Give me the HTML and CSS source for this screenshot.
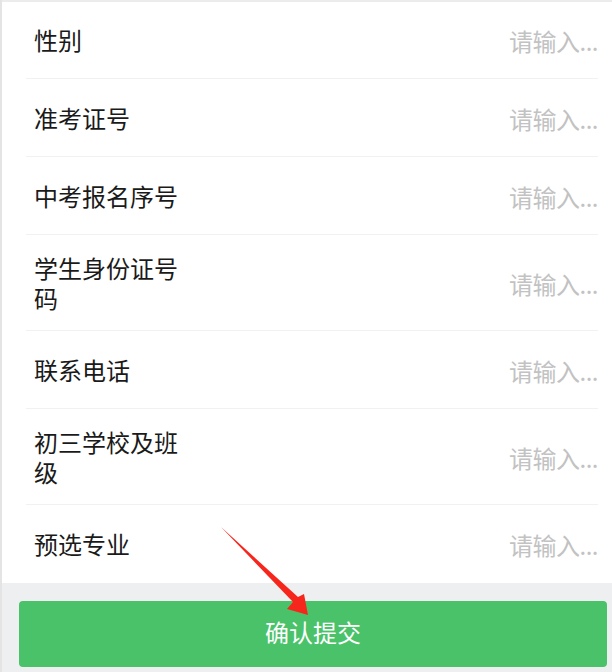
FILE: index.html
```html
<!DOCTYPE html>
<html lang="zh-CN">
<head>
    <meta charset="UTF-8">
    <meta name="viewport" content="width=device-width, initial-scale=1.0">
    <title>报名信息</title>
    <link rel="stylesheet" href="styles.css">
</head>
<body>
    <div class="page">
        <div class="edge"></div>
        <div class="main">
            <div class="form">
                <div class="form-row">
                    <label class="label">性别</label>
                    <input class="field" type="text" placeholder="请输入...">
                </div>
                <div class="form-row">
                    <label class="label">准考证号</label>
                    <input class="field" type="text" placeholder="请输入...">
                </div>
                <div class="form-row">
                    <label class="label">中考报名序号</label>
                    <input class="field" type="text" placeholder="请输入...">
                </div>
                <div class="form-row">
                    <label class="label">学生身份证号码</label>
                    <input class="field" type="text" placeholder="请输入...">
                </div>
                <div class="form-row">
                    <label class="label">联系电话</label>
                    <input class="field" type="text" placeholder="请输入...">
                </div>
                <div class="form-row">
                    <label class="label">初三学校及班级</label>
                    <input class="field" type="text" placeholder="请输入...">
                </div>
                <div class="form-row">
                    <label class="label">预选专业</label>
                    <input class="field" type="text" placeholder="请输入...">
                </div>
            </div>

            <div class="footer">
                <button class="btn-submit">确认提交</button>
            </div>
        </div>
    </div>

    <!-- annotation arrow pointing at the submit button -->
    <svg class="pointer" width="612" height="672" viewBox="0 0 612 672">
        <polygon points="221,527 298,597 304,594 308,615 287,609 293,602" fill="#f7261c"/>
    </svg>
</body>
</html>
```

FILE: styles.css
```css
:root {
    --text-color: #1a1a1a;
    --placeholder: #c2c2c2;
    --line-color: #f1f1f1;
    --bg-grey: #eeeff1;
    --green: #4ac26a;
}

* {
    box-sizing: border-box;
    margin: 0;
    padding: 0;
}

body {
    font-family: "Noto Sans CJK SC", "Noto Sans", sans-serif;
    color: var(--text-color);
    background-color: #fff;
    width: 612px;
    height: 672px;
    overflow: hidden;
    position: relative;
}

.page {
    display: flex;
    height: 672px;
}

.edge {
    width: 2px;
    background-color: #e4e4e4;
}

.main {
    flex: 1;
    display: flex;
    flex-direction: column;
    border-top: 2px solid #ececec;
}

.form {
    background-color: #fff;
}

.form-row {
    display: flex;
    align-items: center;
    margin: 0 14px 0 24px;
    padding: 18px 0 17px 8px;
    border-bottom: 1px solid var(--line-color);
}

.form-row:first-child {
    padding-top: 17px;
}

.form-row:last-child {
    border-bottom: none;
    padding-bottom: 18px;
}

.label {
    width: 160px;
    flex-shrink: 0;
    font-size: 24px;
    line-height: 30px;
}

.field {
    flex: 1;
    min-width: 0;
    height: 42px;
    border: none;
    outline: none;
    background: transparent;
    text-align: right;
    font-family: inherit;
    font-size: 24px;
    letter-spacing: -0.5px;
    color: var(--text-color);
}

.field::placeholder {
    color: var(--placeholder);
}

.footer {
    flex: 1;
    background-color: var(--bg-grey);
    padding: 18px 5px 0 17px;
}

.btn-submit {
    display: block;
    width: 100%;
    height: 66px;
    border: none;
    border-radius: 4px;
    background-color: var(--green);
    color: #fff;
    font-family: inherit;
    font-size: 24px;
    line-height: 62px;
    padding-bottom: 4px;
    cursor: pointer;
}

.pointer {
    position: absolute;
    left: 0;
    top: 0;
    pointer-events: none;
}
```
